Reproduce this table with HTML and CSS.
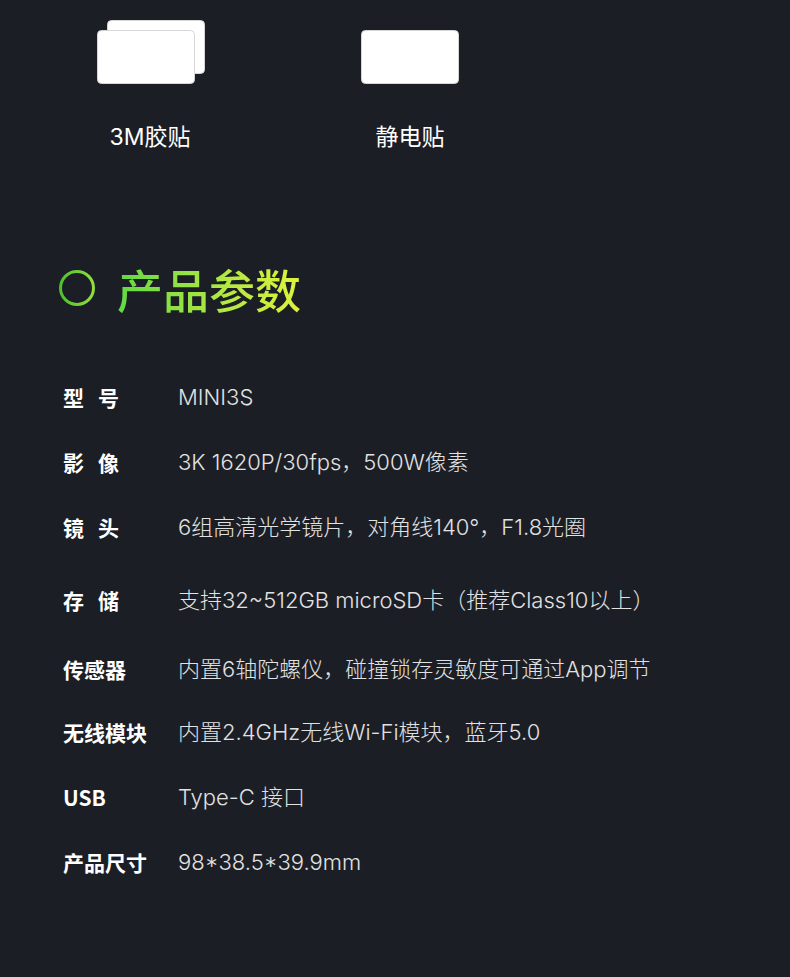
FILE: index.html
```html
<!DOCTYPE html>
<html lang="zh-CN">
<head>
<meta charset="utf-8">
<title>产品参数</title>
<link rel="stylesheet" href="styles.css">
</head>
<body>
<main class="page">
  <section class="accessories">
    <div class="acc">
      <svg class="acc-icon" width="109" height="65" viewBox="0 0 109 65">
        <rect x="10.5" y="0.5" width="97" height="53" rx="4" fill="#fff" stroke="#d6d6d6"/>
        <rect x="0.5" y="10.5" width="97" height="53" rx="4" fill="#fff" stroke="#d6d6d6"/>
      </svg>
      <div class="acc-label">3M胶贴</div>
    </div>
    <div class="acc">
      <svg class="acc-icon acc-icon--single" width="98" height="55" viewBox="0 0 98 55">
        <rect x="0.5" y="0.5" width="97" height="53" rx="4" fill="#fff" stroke="#d6d6d6"/>
      </svg>
      <div class="acc-label">静电贴</div>
    </div>
  </section>

  <h2 class="section-title">
    <span class="ring"></span>
    <span class="title-text">产品参数</span>
  </h2>

  <dl class="specs">
    <div class="row"><dt class="key key--spaced">型号</dt><dd class="val">MINI3S</dd></div>
    <div class="row"><dt class="key key--spaced">影像</dt><dd class="val">3K 1620P/30fps，500W像素</dd></div>
    <div class="row"><dt class="key key--spaced">镜头</dt><dd class="val">6组高清光学镜片，对角线140°，F1.8光圈</dd></div>
    <div class="row row--s1"><dt class="key key--spaced">存储</dt><dd class="val">支持32~512GB microSD卡（推荐Class10以上）</dd></div>
    <div class="row row--s2"><dt class="key">传感器</dt><dd class="val">内置6轴陀螺仪，碰撞锁存灵敏度可通过App调节</dd></div>
    <div class="row row--s3"><dt class="key">无线模块</dt><dd class="val">内置2.4GHz无线Wi-Fi模块，蓝牙5.0</dd></div>
    <div class="row"><dt class="key">USB</dt><dd class="val">Type-C 接口</dd></div>
    <div class="row"><dt class="key">产品尺寸</dt><dd class="val">98*38.5*39.9mm</dd></div>
  </dl>
</main>
</body>
</html>
```

FILE: styles.css
```css
html, body {
  margin: 0;
  padding: 0;
  background: #1c1e25;
}
body {
  font-family: "Inter", "Noto Sans CJK SC", sans-serif;
  color: #fff;
  width: 790px;
  height: 977px;
  overflow: hidden;
}
.page {
  padding-top: 20px;
}
.accessories {
  display: flex;
  padding-left: 70px;
  gap: 100px;
}
.acc {
  width: 160px;
  display: flex;
  flex-direction: column;
  align-items: center;
}
.acc-icon {
  display: block;
  margin-left: 2px;
}
.acc-icon--single {
  margin-top: 10px;
  margin-left: 0;
}
.acc-label {
  margin-top: 37px;
  font-size: 23px;
  font-weight: 400;
  line-height: 30px;
  color: #fff;
}
.section-title {
  display: flex;
  align-items: center;
  margin: 106px 0 0 59px;
  height: 60px;
  font-weight: 400;
}
.ring {
  width: 36px;
  height: 36px;
  box-sizing: border-box;
  border-radius: 50%;
  border: 3px solid transparent;
  background: linear-gradient(#1c1e25, #1c1e25) padding-box,
              linear-gradient(90deg, #4cbf2f, #95df3e) border-box;
}
.title-text {
  margin-left: 22px;
  font-family: "Noto Sans CJK SC", sans-serif;
  font-size: 46px;
  font-weight: 500;
  line-height: 60px;
  background: linear-gradient(90deg, #62d844 0%, #a8e643 50%, #dff33c 100%);
  -webkit-background-clip: text;
  background-clip: text;
  color: transparent;
}
.specs {
  margin: 64px 0 0;
  padding: 0 0 0 63px;
  display: flex;
  flex-direction: column;
  gap: 35px;
}
.row {
  display: flex;
  align-items: center;
  height: 30px;
}
.row--s1 { margin-top: 8px; }
.row--s2 { margin-top: 4px; }
.row--s3 { margin-top: -2px; }
.key {
  width: 115px;
  font-family: "Noto Sans CJK SC", sans-serif;
  font-size: 21px;
  font-weight: 700;
  color: #fff;
  line-height: 30px;
  margin: 0;
}
.key--spaced {
  letter-spacing: 14px;
}
.val {
  margin: 0;
  font-size: 22px;
  font-weight: 300;
  color: #e2e2e2;
  line-height: 30px;
}
```
